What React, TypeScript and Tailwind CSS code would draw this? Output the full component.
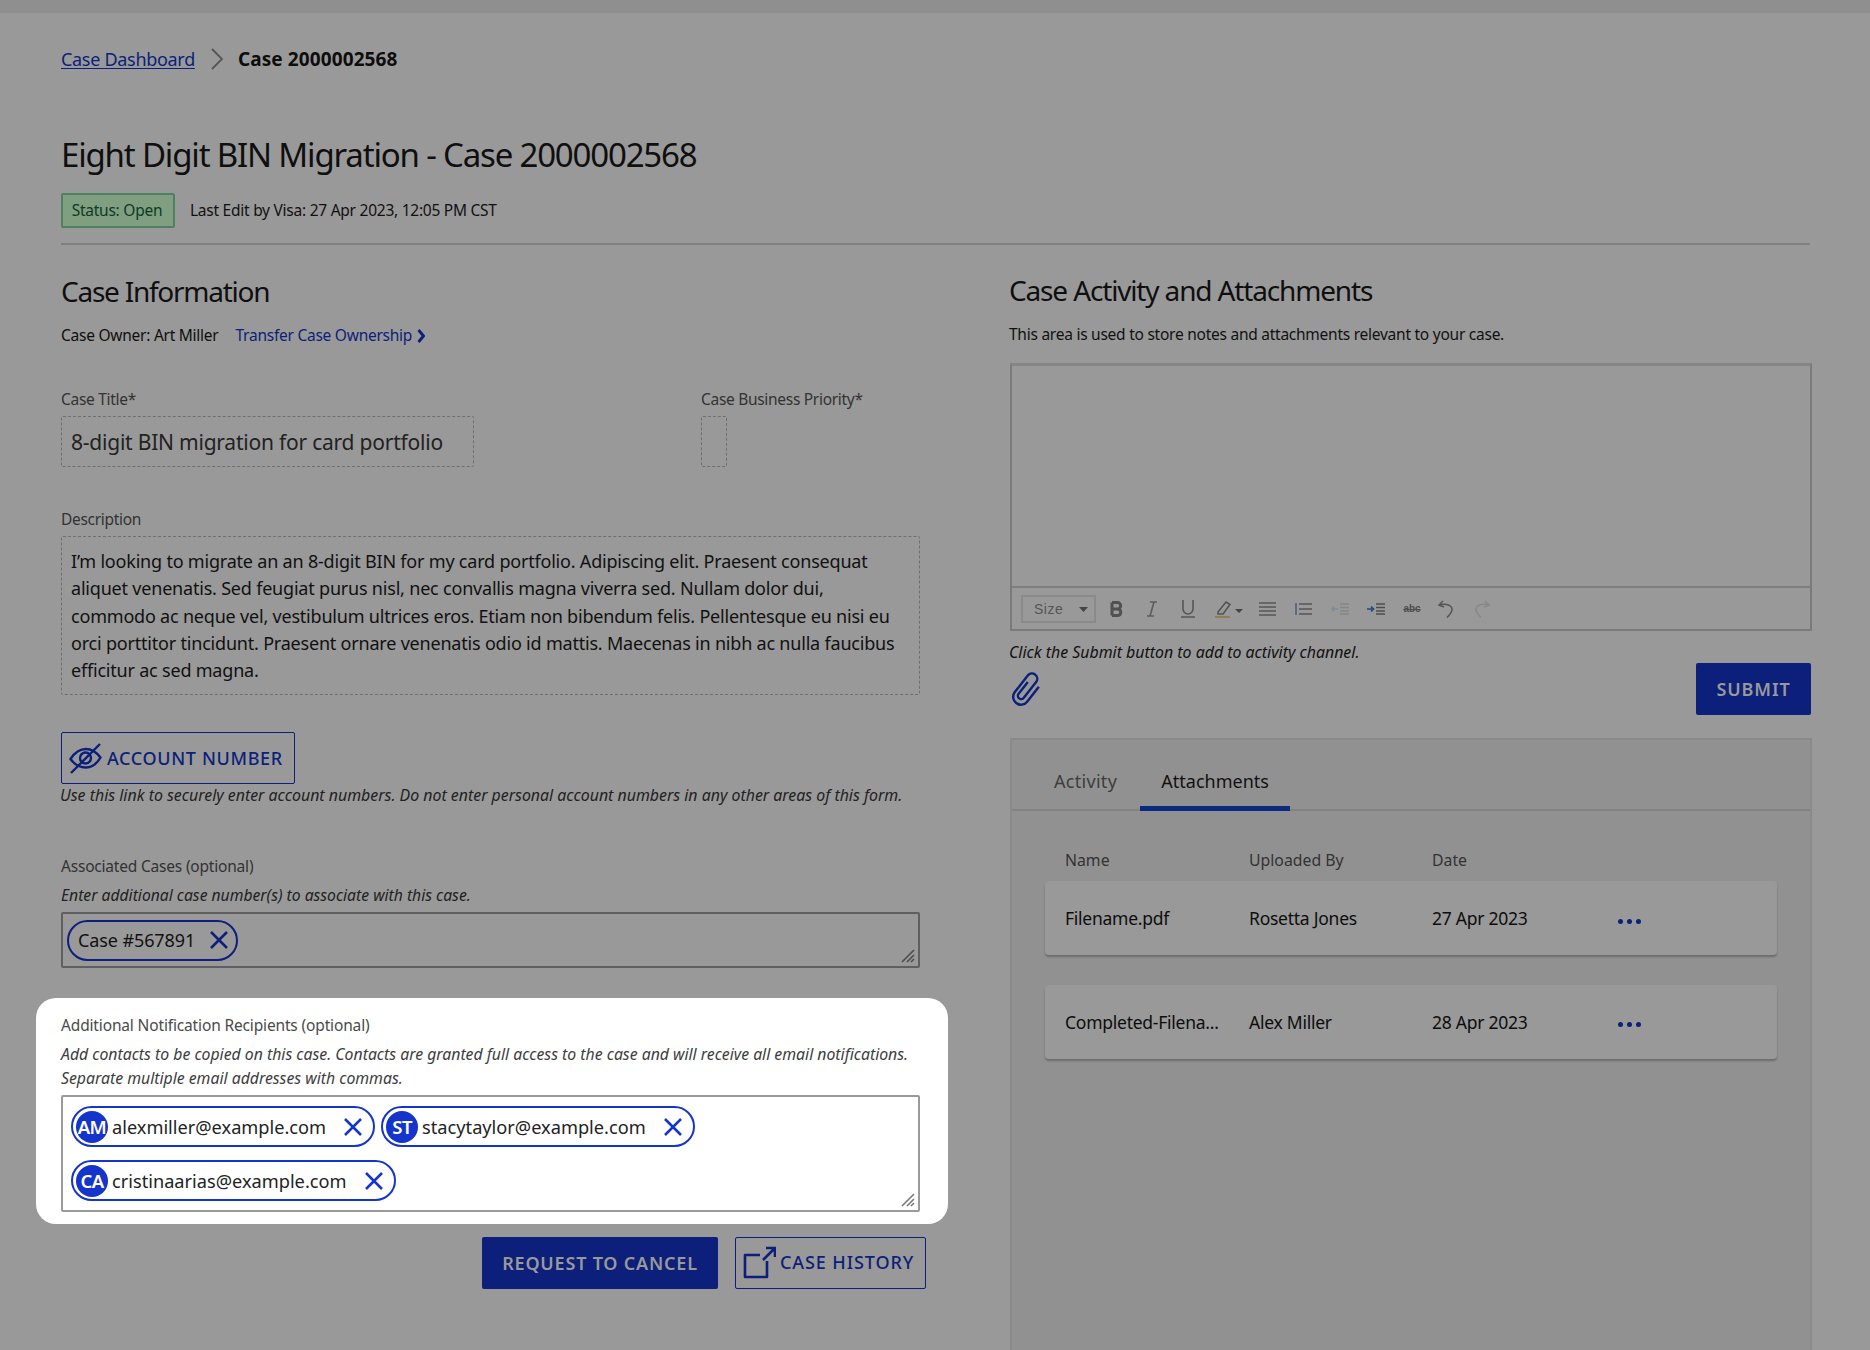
import React from "react";

const XIcon = ({ c = "#1434cb" }: { c?: string }) => (
  <svg width="20" height="20" viewBox="0 0 20 20" fill="none" stroke={c} strokeWidth="2.5" className="shrink-0">
    <path d="M2 2 18 18M18 2 2 18" />
  </svg>
);

const Grip = ({ c }: { c: string }) => (
  <svg width="14" height="14" viewBox="0 0 14 14" className="absolute right-[3px] bottom-[3px]" fill="none" stroke={c} strokeWidth="1.6">
    <path d="M1 13 13 1M6 13 13 6M10 13 13 10" />
  </svg>
);

const Chip = ({ initials, email }: { initials: string; email: string }) => (
  <div className="flex h-[41px] items-center rounded-full border-2 border-[#1434cb] pl-[3px] pr-[10px]">
    <span className="flex h-[32px] w-[32px] shrink-0 items-center justify-center rounded-full bg-[#1434cb] text-[18.5px] font-semibold tracking-[-0.6px] text-white">{initials}</span>
    <span className="ml-[4px] mr-[17px] pt-[2px] text-[18.2px] text-[#222]">{email}</span>
    <XIcon />
  </div>
);

const Line = ({ w = 24 }: { w?: number }) => <span style={{ width: w }} className="block h-[2px] bg-[#666]" />;

const Toolbar = () => (
  <div className="flex h-[44px] items-center border-t-2 border-[#7f7f7f] pl-[9px] text-[#4d4d4d]">
    <div className="flex h-[28px] w-[75px] items-center justify-between border-2 border-[#8a8a8a] pl-[11px] pr-[6px] font-['Liberation_Sans',sans-serif] text-[14px] tracking-[0.5px] text-[#555]">
      Size
      <svg width="9" height="5" viewBox="0 0 9 5"><path d="M0 0h9L4.5 5z" fill="#444" /></svg>
    </div>
    <svg width="14" height="16" viewBox="0 0 14 16" className="ml-[14px]" fill="none" stroke="#515151" strokeWidth="3"><path d="M2 1.5v13M2 1.5h5.5a3.2 3.2 0 0 1 0 6.4H2M2 8h6a3.3 3.3 0 0 1 0 6.5H2" /></svg>
    <svg width="12" height="16" viewBox="0 0 12 16" className="ml-[22px]" fill="none" stroke="#5c5c5c" strokeWidth="1.6"><path d="M4 1h7M1 15h7M8 1 4 15" /></svg>
    <svg width="14" height="18" viewBox="0 0 14 18" className="ml-[23px]" fill="none" stroke="#555" strokeWidth="1.6"><path d="M2 0v9a5 5 0 0 0 10 0V0" /><path d="M0 17h14" strokeWidth="2" stroke="#666" /></svg>
    <svg width="28" height="18" viewBox="0 0 28 18" className="ml-[20px]" fill="none"><path d="M3 12 11 2l4 2.5L8 14l-5 0z" stroke="#515151" strokeWidth="1.5" /><path d="M0 17h15" stroke="#8f7b45" strokeWidth="1.8" /><path d="M20 9h8l-4 4z" fill="#444" /></svg>
    <div className="ml-[16px] flex w-[17px] flex-col gap-[2px]"><Line w={17} /><Line w={17} /><Line w={17} /><Line w={17} /></div>
    <div className="ml-[19px] flex w-[17px] flex-col gap-[3px] border-l-2 border-[#5b6b85] pl-[2px]"><Line w={13} /><Line w={13} /><Line w={13} /></div>
    <svg width="18" height="12" viewBox="0 0 18 12" className="ml-[19px]" fill="none" stroke="#858585" strokeWidth="1.5"><path d="M7 6H1M3 3.5 1 6l2 2.5" stroke="#7e8a99" /><path d="M9 1h9M9 4.5h9M9 8h9M9 11h9" /></svg>
    <svg width="18" height="12" viewBox="0 0 18 12" className="ml-[18px]" fill="none" stroke="#4d4d4d" strokeWidth="1.7"><path d="M0 6h6M4 3.5 6.5 6 4 8.5" stroke="#1f4a80" /><path d="M9 1h9M9 4.5h9M9 8h9M9 11h9" /></svg>
    <span className="ml-[18px] w-[18px] text-center font-['Liberation_Sans',sans-serif] text-[10px] font-bold leading-none text-[#4f4f4f] line-through">abc</span>
    <svg width="16" height="18" viewBox="0 0 16 18" className="ml-[17px]" fill="none" stroke="#555" strokeWidth="1.5"><path d="M5 1 1 5l5 2M1.5 5C7 3 14 5 14 9.500c0 3-2.500 5.500-5 8" /></svg>
    <svg width="16" height="18" viewBox="0 0 16 18" className="ml-[20px]" fill="none" stroke="#888" strokeWidth="1.5"><path d="M11 1l4 4-5 2M14.500 5C9 3 2 5 2 9.500c0 3 2.500 5.500 5 8" /></svg>
  </div>
);

const Row = ({ name, by, date, dotsClass }: { name: string; by: string; date: string; dotsClass: string }) => (
  <div className="flex h-[74px] items-center rounded-[4px] bg-[#999] pl-[20px] text-[17.5px] tracking-[-0.25px] text-[#0d0d0d] shadow-[0_2px_2px_rgba(0,0,0,0.25)]">
    <span className="w-[184px]">{name}</span>
    <span className="w-[183px]">{by}</span>
    <span className="w-[186px]">{date}</span>
    <span className={`flex gap-[4px] ${dotsClass}`}>
      <i className="block h-[5px] w-[5px] rounded-full bg-[#0c1f7a]" />
      <i className="block h-[5px] w-[5px] rounded-full bg-[#0c1f7a]" />
      <i className="block h-[5px] w-[5px] rounded-full bg-[#0c1f7a]" />
    </span>
  </div>
);

export default function App() {
  return (
    <div className="h-[1350px] w-[1870px] overflow-hidden bg-[#999] font-['Noto_Sans',sans-serif] text-[#0f0f0f]">
      <div className="h-[13px] bg-[#8f8f8f]" />
      <div className="px-[61px]">
        <nav className="mt-[31px] flex h-[30px] items-center">
          <a className="text-[18px] tracking-[-0.3px] text-[#0c1f7a] underline underline-offset-2">Case Dashboard</a>
          <svg width="12" height="22" viewBox="0 0 12 22" className="ml-[16px]" fill="none" stroke="#555" strokeWidth="1.8"><path d="M1 1l10 10-10 10" /></svg>
          <b className="ml-[15px] text-[19px] font-bold tracking-[0.1px] text-[#0d0d0d]">Case 2000002568</b>
        </nav>
        <h1 className="mt-[60px] h-[42px] text-[33px] leading-[42px] tracking-[-1.18px]">Eight Digit BIN Migration - Case 2000002568</h1>
        <div className="mt-[17px] flex w-[1749px] items-center border-b-2 border-[#818181] pb-[15px]">
          <span className="flex h-[35px] w-[114px] items-center justify-center rounded-[2px] border-2 border-[#4f8060] bg-[#7f9f80] pr-[2px] text-[15.5px] tracking-[-0.25px] text-[#0e3a26]">Status: Open</span>
          <span className="ml-[15px] text-[15.5px] tracking-[-0.25px] text-[#111]">Last Edit by Visa: 27 Apr 2023, 12:05 PM CST</span>
        </div>
        <div className="flex">
          <div className="w-[859px] shrink-0">
            <h2 className="mt-[27px] h-[38px] text-[28px] leading-[38px] tracking-[-1.25px]">Case Information</h2>
            <div className="mt-[14px] flex h-[24px] items-center text-[15.5px] tracking-[-0.25px]">
              <span>Case Owner: Art Miller</span>
              <span className="ml-[17px] text-[#0c1f7a]">Transfer Case Ownership</span>
              <svg width="8" height="14" viewBox="0 0 8 14" className="ml-[5px]" fill="none" stroke="#0c1f7a" strokeWidth="2.8"><path d="M1.500 1l5 6-5 6" /></svg>
            </div>
            <div className="mt-[39px] flex">
              <div className="w-[640px]">
                <div className="h-[24px] text-[15.5px] leading-[24px] tracking-[-0.3px] text-[#333]">Case Title*</div>
                <div className="mt-[5px] flex h-[51px] w-[413px] items-center rounded-[2px] border border-dashed border-[#6f6f6f] pl-[9px] pt-[2px] text-[21px] tracking-[-0.22px] text-[#222]">8-digit BIN migration for card portfolio</div>
              </div>
              <div>
                <div className="h-[24px] text-[15.5px] leading-[24px] tracking-[-0.3px] text-[#333]">Case Business Priority*</div>
                <div className="mt-[5px] h-[51px] w-[26px] rounded-[2px] border border-dashed border-[#6f6f6f]" />
              </div>
            </div>
            <div className="mt-[40px] h-[24px] text-[15.5px] leading-[24px] tracking-[-0.3px] text-[#333]">Description</div>
            <div className="mt-[5px] h-[159px] rounded-[2px] border border-dashed border-[#6f6f6f] pl-[9px] pr-[8px] pt-[11px] text-[18px] leading-[27.3px] tracking-[-0.2px] text-[#111]">
              I’m looking to migrate an an 8-digit BIN for my card portfolio. Adipiscing elit. Praesent consequat aliquet venenatis. Sed feugiat purus nisl, nec convallis magna viverra sed. Nullam dolor dui, commodo ac neque vel, vestibulum ultrices eros. Etiam non bibendum felis. Pellentesque eu nisi eu orci porttitor tincidunt. Praesent ornare venenatis odio id mattis. Maecenas in nibh ac nulla faucibus efficitur ac sed magna.
            </div>
            <div className="mt-[37px] flex h-[52px] w-[234px] items-center rounded-[2px] border-[1.5px] border-[#0c1f7a] pl-[7px] text-[18px] font-medium tracking-[0.65px] text-[#0c1f7a]">
              <svg width="33" height="32" viewBox="0 0 33 32" fill="none" stroke="#0c1f7a" strokeWidth="2.4" className="shrink-0">
                <path d="M1.500 17C7 8.500 12 7 17 7s9.500 2 14.500 8.500C27 23 22 25.500 17 25.500S6.500 24 1.500 17z" />
                <circle cx="16.500" cy="16" r="5.500" />
                <path d="M2 31 31 2" />
              </svg>
              <span className="ml-[5px]">ACCOUNT NUMBER</span>
            </div>
            <p className="-ml-[1px] -mt-[1px] h-[24px] text-[15.9px] italic leading-[24px] text-[#222]">Use this link to securely enter account numbers. Do not enter personal account numbers in any other areas of this form.</p>
            <div className="mt-[47px] h-[24px] text-[15.5px] leading-[24px] tracking-[-0.2px] text-[#333]">Associated Cases (optional)</div>
            <p className="mt-[5px] h-[24px] text-[15.7px] italic leading-[24px] text-[#222]">Enter additional case number(s) to associate with this case.</p>
            <div className="relative mt-[5px] flex h-[56px] items-center rounded-[2px] border-2 border-[#5f5f5f] pl-[4px]">
              <div className="flex h-[41px] w-[171px] items-center justify-between rounded-full border-2 border-[#0c1f7a] pl-[9px] pr-[7px] text-[18px] tracking-[-0.1px] text-[#111]">
                Case #567891
                <XIcon c="#0c1f7a" />
              </div>
              <Grip c="#4d4d4d" />
            </div>
            <div className="-ml-[25px] -mr-[28px] mt-[30px] h-[226px] rounded-[20px] bg-white pl-[25px] pr-[28px] pt-[15px]">
              <div className="h-[24px] text-[15.5px] leading-[24px] tracking-[-0.15px] text-[#4a4a4a]">Additional Notification Recipients (optional)</div>
              <p className="mt-[5px] text-[15.8px] italic leading-[24px] text-[#3d3d3d]">Add contacts to be copied on this case. Contacts are granted full access to the case and will receive all email notifications.<br />Separate multiple email addresses with commas.</p>
              <div className="relative mt-[5px] h-[117px] rounded-[2px] border-2 border-[#9a9a9a] pl-[8px] pt-[9px]">
                <div className="flex gap-[6px]">
                  <Chip initials="AM" email="alexmiller@example.com" />
                  <Chip initials="ST" email="stacytaylor@example.com" />
                </div>
                <div className="mt-[13px] flex">
                  <Chip initials="CA" email="cristinaarias@example.com" />
                </div>
                <Grip c="#7a7a7a" />
              </div>
            </div>
            <div className="-mr-[6px] mt-[13px] flex justify-end gap-[17px]">
              <div className="flex h-[52px] w-[236px] items-center justify-center rounded-[2px] bg-[#0c1f7a] text-[18px] font-semibold tracking-[0.8px] text-[#999]">REQUEST TO CANCEL</div>
              <div className="flex h-[52px] w-[191px] items-center rounded-[2px] border-[1.5px] border-[#0c1f7a] pb-[2px] pl-[7px] text-[18px] font-medium tracking-[0.9px] text-[#0c1f7a]">
                <svg width="33" height="33" viewBox="0 0 33 33" fill="none" stroke="#0c1f7a" strokeWidth="2.6" className="shrink-0">
                  <path d="M17 9H2v22h22V15" strokeLinejoin="round" />
                  <path d="M20 14 31 3M23 2h9v9" />
                </svg>
                <span className="ml-[4px]">CASE HISTORY</span>
              </div>
            </div>
          </div>
          <div className="ml-[90px] w-[802px] shrink-0">
            <h2 className="-ml-[1px] mt-[26px] h-[38px] text-[28px] leading-[38px] tracking-[-1.15px]">Case Activity and Attachments</h2>
            <p className="-ml-[1px] mt-[13px] h-[24px] text-[15.5px] leading-[24px] tracking-[-0.25px] text-[#111]">This area is used to store notes and attachments relevant to your case.</p>
            <div className="mt-[17px] h-[268px] border-2 border-t-[3px] border-[#7a7a7a] border-t-[#858585]">
              <div className="h-[220px]" />
              <Toolbar />
            </div>
            <p className="-ml-[1px] mt-[9px] h-[24px] text-[15.9px] italic leading-[24px] text-[#111]">Click the Submit button to add to activity channel.</p>
            <div className="flex items-start justify-between">
              <svg width="31" height="36" viewBox="0 0 31 36" fill="none" stroke="#0c1f7a" strokeWidth="2.4" className="mt-[7px]">
                <g transform="rotate(38 15.500 18)">
                  <path d="M13 11v15a3.300 3.300 0 0 0 6.600 0V6a5.300 5.300 0 0 0-10.600 0v21a7.800 7.800 0 0 0 15.600 0V8" />
                </g>
              </svg>
              <div className="mr-[1px] mt-[-1px] flex h-[52px] w-[115px] items-center justify-center rounded-[2px] bg-[#0c1f7a] text-[18px] font-semibold tracking-[0.9px] text-[#999]">SUBMIT</div>
            </div>
            <div className="mt-[23px] h-[620px] border-2 border-b-0 border-[#8a8a8a] bg-[#919191]">
              <div className="flex h-[71px] border-b-2 border-[#828282] pl-[42px] text-[18px]">
                <span className="pt-[28px] tracking-[0.3px] text-[#3d3d3d]">Activity</span>
                <span className="ml-[23px] h-[71px] w-[150px] border-b-[5px] border-[#0a2a80] pt-[28px] text-center text-[#111]">Attachments</span>
              </div>
              <div className="px-[33px]">
                <div className="flex h-[70px] items-end pb-[8px] pl-[20px] text-[15.8px] text-[#333]">
                  <span className="w-[184px]">Name</span>
                  <span className="w-[183px]">Uploaded By</span>
                  <span>Date</span>
                </div>
                <div className="flex flex-col gap-[30px]">
                  <Row name="Filename.pdf" by="Rosetta Jones" date="27 Apr 2023" dotsClass="mt-[7px]" />
                  <Row name="Completed-Filena..." by="Alex Miller" date="28 Apr 2023" dotsClass="mt-[4px]" />
                </div>
              </div>
            </div>
          </div>
        </div>
      </div>
    </div>
  );
}
